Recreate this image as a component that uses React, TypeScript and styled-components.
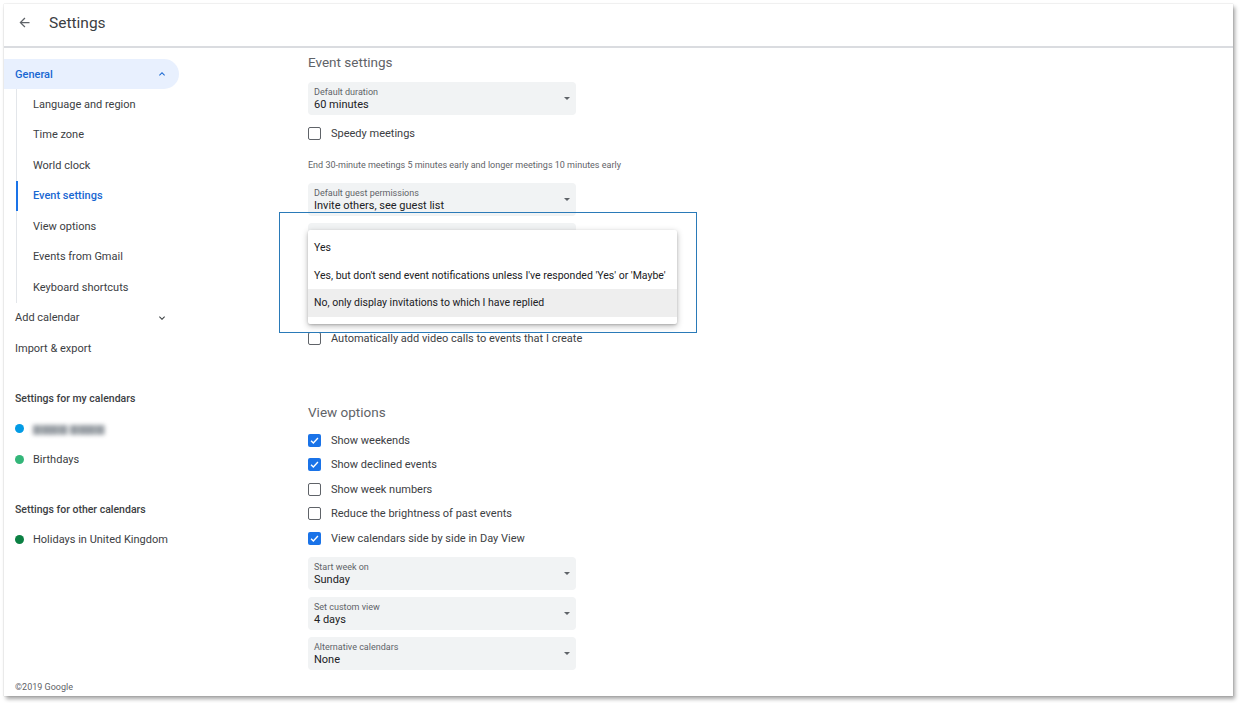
import React from 'react'
import styled, { createGlobalStyle } from 'styled-components'

const GlobalStyle = createGlobalStyle`
  html, body {
    margin: 0;
    padding: 0;
    background: #ffffff;
    font-family: Roboto, "Liberation Sans", Arial, sans-serif;
    color: #3c4043;
  }
`

const Page = styled.div`
  width: 1240px;
  height: 703px;
  padding: 4px 0 0 4px;
  box-sizing: border-box;
  background: #ffffff;
`

const Window = styled.div`
  width: 1229px;
  height: 692px;
  background: #ffffff;
  box-shadow: 0 0 1px rgba(0, 0, 0, 0.25), 2px 3px 4px rgba(0, 0, 0, 0.35);
  display: flex;
  flex-direction: column;
  overflow: hidden;
`

const Header = styled.header`
  height: 44px;
  box-sizing: border-box;
  flex: none;
  display: flex;
  align-items: center;
  border-bottom: 2px solid #dadce0;
  padding: 0 0 5px 12px;
  gap: 17px;
`

const BackButton = styled.button`
  border: none;
  background: transparent;
  padding: 0;
  width: 16px;
  height: 16px;
  display: flex;
  align-items: center;
  justify-content: center;
  color: #5f6368;
`

const HeaderTitle = styled.h1`
  margin: 0;
  font-size: 15.5px;
  font-weight: 400;
  color: #3c4043;
`

const Body = styled.div`
  flex: 1;
  display: flex;
  min-height: 0;
`

const Sidebar = styled.nav`
  width: 256px;
  flex: none;
  display: flex;
  flex-direction: column;
  padding-top: 11px;
`

const GeneralPill = styled.div`
  width: 175px;
  height: 30px;
  box-sizing: border-box;
  background: #e8f0fe;
  border-radius: 0 15px 15px 0;
  display: flex;
  align-items: center;
  justify-content: space-between;
  padding: 0 11px 0 11px;
  color: #1967d2;
  font-size: 11px;
  font-weight: 500;
`

const SubList = styled.div`
  margin-left: 12px;
  border-left: 1px solid #e3e6ea;
`

const SubItem = styled.div<{ $active?: boolean }>`
  height: 30.5px;
  display: flex;
  align-items: center;
  padding-left: 15px;
  font-size: 11px;
  color: ${(p) => (p.$active ? '#1967d2' : '#3c4043')};
  font-weight: ${(p) => (p.$active ? 500 : 400)};
  margin-left: -1px;
  border-left: 2px solid ${(p) => (p.$active ? '#1a73e8' : 'transparent')};
`

const NavRow = styled.div`
  width: 175px;
  box-sizing: border-box;
  height: 30.5px;
  display: flex;
  align-items: center;
  justify-content: space-between;
  padding: 0 11px;
  font-size: 11px;
  color: #3c4043;
`

const SideHeading = styled.div`
  height: 30.5px;
  display: flex;
  align-items: center;
  padding-left: 11px;
  margin-top: 19.5px;
  font-size: 10.5px;
  font-weight: 500;
  color: #3c4043;
`

const CalRow = styled.div`
  height: 30.5px;
  display: flex;
  align-items: center;
  padding-left: 11px;
  gap: 9px;
  font-size: 11px;
  color: #3c4043;
`

const Dot = styled.span<{ $color: string }>`
  width: 9px;
  height: 9px;
  border-radius: 50%;
  background: ${(p) => p.$color};
  flex: none;
`

const Blurred = styled.span`
  filter: blur(2.2px);
  color: #9aa0a6;
  font-size: 11px;
  letter-spacing: 0.5px;
`

const Footer = styled.div`
  margin-top: auto;
  padding: 0 0 2px 11px;
  font-size: 9px;
  color: #5f6368;
  line-height: 14px;
`

const Main = styled.main`
  flex: 1;
  padding: 4px 0 0 48px;
  display: flex;
  flex-direction: column;
  position: relative;
`

const SectionTitle = styled.h2<{ $top?: number }>`
  margin: ${(p) => p.$top ?? 0}px 0 0;
  height: 20px;
  line-height: 20px;
  font-size: 13.5px;
  font-weight: 400;
  color: #5f6368;
`

const SelectBox = styled.div<{ $top: number }>`
  width: 268px;
  height: 33px;
  box-sizing: border-box;
  margin-top: ${(p) => p.$top}px;
  background: #f1f3f4;
  border-radius: 4px;
  padding: 5px 6px 0;
  position: relative;
  flex: none;
`

const SelectLabel = styled.div`
  font-size: 9px;
  line-height: 11px;
  color: #5f6368;
`

const SelectValue = styled.div`
  font-size: 11px;
  line-height: 13px;
  color: #202124;
`

const Caret = styled.span`
  position: absolute;
  right: 6px;
  top: 15px;
  width: 0;
  height: 0;
  border-left: 3px solid transparent;
  border-right: 3px solid transparent;
  border-top: 3px solid #5f6368;
`

const CheckRow = styled.label<{ $top: number }>`
  display: flex;
  align-items: center;
  gap: 10px;
  height: 24.5px;
  margin-top: ${(p) => p.$top}px;
  font-size: 11px;
  color: #3c4043;
`

const Box = styled.span<{ $checked?: boolean }>`
  width: 13px;
  height: 13px;
  box-sizing: border-box;
  border-radius: 2px;
  border: ${(p) => (p.$checked ? 'none' : '1.5px solid #5f6368')};
  background: ${(p) => (p.$checked ? '#1a73e8' : '#ffffff')};
  display: flex;
  align-items: center;
  justify-content: center;
  flex: none;
`

const Hint = styled.div`
  margin-top: 12px;
  height: 14px;
  line-height: 14px;
  font-size: 9px;
  color: #5f6368;
`

const Menu = styled.div`
  position: absolute;
  left: 48px;
  top: 182px;
  width: 369px;
  padding: 4px 0 7px;
  background: #ffffff;
  box-shadow: 0 2px 6px rgba(0, 0, 0, 0.28), 0 1px 2px rgba(0, 0, 0, 0.15);
  border-radius: 2px;
  z-index: 2;
`

const MenuItem = styled.div<{ $hover?: boolean }>`
  height: 27.5px;
  display: flex;
  align-items: center;
  padding-left: 6px;
  font-size: 10.5px;
  white-space: nowrap;
  color: #202124;
  background: ${(p) => (p.$hover ? '#eeeeee' : 'transparent')};
`

const Highlight = styled.div`
  position: absolute;
  left: 19px;
  top: 164px;
  width: 418px;
  height: 121px;
  box-sizing: border-box;
  border: 1.5px solid #2a7ab8;
  z-index: 3;
`

const Check = () => (
  <svg width="11" height="11" viewBox="0 0 24 24">
    <path d="M4.5 12.5l5 5 10-11" fill="none" stroke="#ffffff" strokeWidth="3" />
  </svg>
)

const Chevron = ({ up }: { up?: boolean }) => (
  <svg width="12" height="12" viewBox="0 0 24 24" fill="currentColor">
    {up ? (
      <path d="M7.41 15.41L12 10.83l4.59 4.58L18 14l-6-6-6 6z" />
    ) : (
      <path d="M7.41 8.59L12 13.17l4.59-4.58L18 10l-6 6-6-6z" />
    )}
  </svg>
)

const Checkbox = ({ label, checked, top }: { label: string; checked?: boolean; top: number }) => (
  <CheckRow $top={top}>
    <Box $checked={checked}>{checked && <Check />}</Box>
    {label}
  </CheckRow>
)

const Select = ({ label, value, top }: { label?: string; value?: string; top: number }) => (
  <SelectBox $top={top}>
    {label && <SelectLabel>{label}</SelectLabel>}
    {value && <SelectValue>{value}</SelectValue>}
    <Caret />
  </SelectBox>
)

const subItems = [
  'Language and region',
  'Time zone',
  'World clock',
  'Event settings',
  'View options',
  'Events from Gmail',
  'Keyboard shortcuts',
]

export default function App() {
  return (
    <>
      <GlobalStyle />
      <Page>
        <Window>
          <Header>
            <BackButton aria-label="Back">
              <svg width="15" height="15" viewBox="0 0 24 24" fill="#5f6368">
                <path d="M20 11H7.83l5.59-5.59L12 4l-8 8 8 8 1.41-1.41L7.83 13H20v-2z" />
              </svg>
            </BackButton>
            <HeaderTitle>Settings</HeaderTitle>
          </Header>
          <Body>
            <Sidebar>
              <GeneralPill>
                General
                <Chevron up />
              </GeneralPill>
              <SubList>
                {subItems.map((item) => (
                  <SubItem key={item} $active={item === 'Event settings'}>
                    {item}
                  </SubItem>
                ))}
              </SubList>
              <NavRow>
                Add calendar
                <Chevron />
              </NavRow>
              <NavRow>Import &amp; export</NavRow>
              <SideHeading>Settings for my calendars</SideHeading>
              <CalRow>
                <Dot $color="#039be5" />
                <Blurred>▆▆▆▆ ▆▆▆▆</Blurred>
              </CalRow>
              <CalRow>
                <Dot $color="#33b679" />
                Birthdays
              </CalRow>
              <SideHeading>Settings for other calendars</SideHeading>
              <CalRow>
                <Dot $color="#0b8043" />
                Holidays in United Kingdom
              </CalRow>
              <Footer>©2019 Google</Footer>
            </Sidebar>
            <Main>
              <SectionTitle>Event settings</SectionTitle>
              <Select label="Default duration" value="60 minutes" top={10} />
              <Checkbox label="Speedy meetings" top={6} />
              <Hint>End 30-minute meetings 5 minutes early and longer meetings 10 minutes early</Hint>
              <Select label="Default guest permissions" value="Invite others, see guest list" top={11} />
              <Select top={7} />
              <Checkbox label="Automatically add video calls to events that I create" top={71} />
              <SectionTitle $top={51}>View options</SectionTitle>
              <Checkbox label="Show weekends" checked top={6} />
              <Checkbox label="Show declined events" checked top={0} />
              <Checkbox label="Show week numbers" top={0} />
              <Checkbox label="Reduce the brightness of past events" top={0} />
              <Checkbox label="View calendars side by side in Day View" checked top={0} />
              <Select label="Start week on" value="Sunday" top={6} />
              <Select label="Set custom view" value="4 days" top={7} />
              <Select label="Alternative calendars" value="None" top={7} />

              <Menu>
                <MenuItem>Yes</MenuItem>
                <MenuItem>Yes, but don't send event notifications unless I've responded 'Yes' or 'Maybe'</MenuItem>
                <MenuItem $hover>No, only display invitations to which I have replied</MenuItem>
              </Menu>
              <Highlight />
            </Main>
          </Body>
        </Window>
      </Page>
    </>
  )
}
